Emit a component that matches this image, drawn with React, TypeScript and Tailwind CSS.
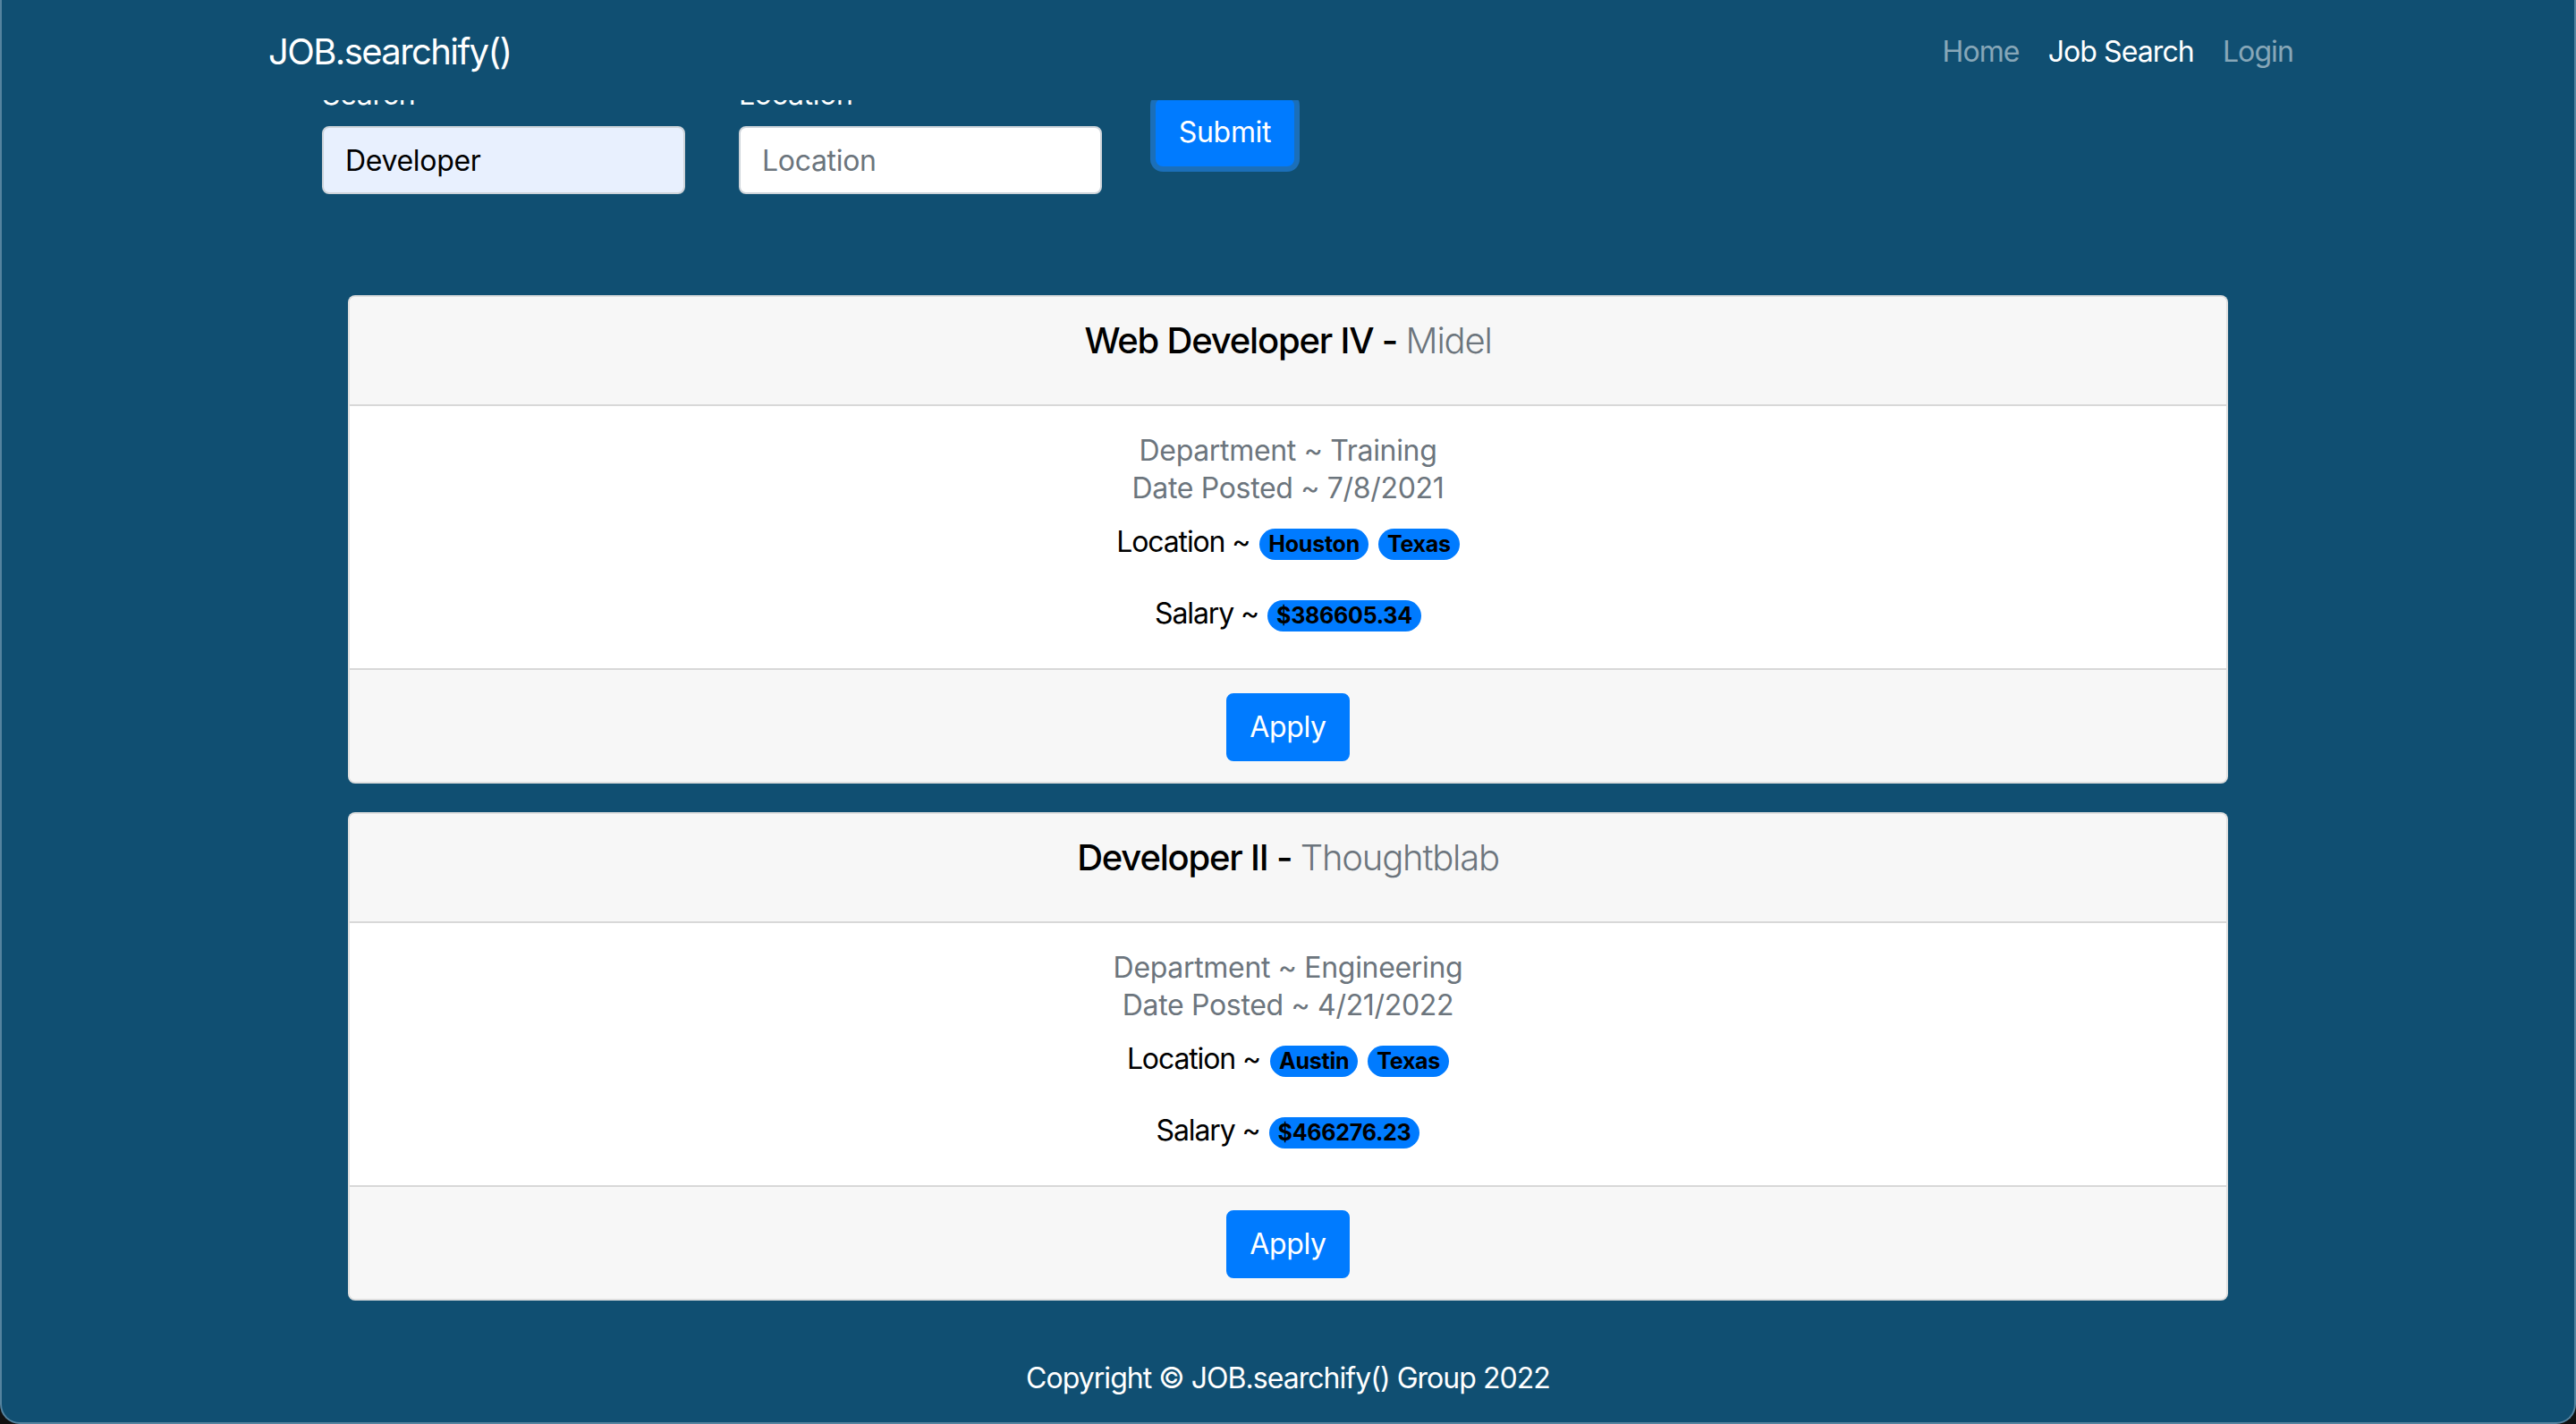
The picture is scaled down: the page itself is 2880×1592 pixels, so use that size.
import React from "react";

function Badge({ children }: { children: React.ReactNode }) {
  return (
    <span className="inline-flex h-[35px] items-center rounded-full bg-[#007bff] px-[10px] text-[25px] font-bold leading-none tracking-[-0.01em] text-black translate-y-[2px]">
      {children}
    </span>
  );
}

type Job = {
  title: string;
  company: string;
  dept: string;
  date: string;
  city: string;
  state: string;
  salary: string;
};

const jobs: Job[] = [
  {
    title: "Web Developer IV",
    company: "Midel",
    dept: "Training",
    date: "7/8/2021",
    city: "Houston",
    state: "Texas",
    salary: "$386605.34",
  },
  {
    title: "Developer II",
    company: "Thoughtblab",
    dept: "Engineering",
    date: "4/21/2022",
    city: "Austin",
    state: "Texas",
    salary: "$466276.23",
  },
];

function JobCard({ job }: { job: Job }) {
  return (
    <div className="overflow-hidden rounded-[8px] border-2 border-black/[.125] bg-white">
      <div className="border-b-2 border-black/[.125] bg-[#f7f7f7] pt-[25px] pb-[47px] text-center">
        <h5 className="text-[40px] leading-[48px] tracking-[-0.03em] text-black">
          <span className="font-medium">{job.title} - </span>
          <span className="font-light text-[#6c757d]">{job.company}</span>
        </h5>
      </div>
      <div className="pt-[29px] pb-[37px] text-center">
        <div className="text-[32px] leading-[42px] tracking-[-0.01em] text-[#6c757d]">
          Department ~ {job.dept}
        </div>
        <div className="text-[32px] leading-[42px] tracking-[-0.01em] text-[#6c757d]">
          Date Posted ~ {job.date}
        </div>
        <div className="mt-[15px] mb-[32px] flex h-[48px] items-center justify-center gap-[11px] text-[32px] leading-[48px] text-black">
          <span className="tracking-[-0.035em]">Location ~</span>
          <Badge>{job.city}</Badge>
          <Badge>{job.state}</Badge>
        </div>
        <div className="flex h-[48px] items-center justify-center gap-[10px] text-[32px] leading-[48px] text-black">
          <span className="tracking-[-0.035em]">Salary ~</span>
          <Badge>{job.salary}</Badge>
        </div>
      </div>
      <div className="flex justify-center border-t-2 border-black/[.125] bg-[#f7f7f7] pt-[26px] pb-[23px]">
        <button className="h-[76px] rounded-[8px] border-2 border-[#007bff] bg-[#007bff] px-[24px] text-[32px] leading-[48px] text-white">
          Apply
        </button>
      </div>
    </div>
  );
}

export default function App() {
  return (
    <div className="min-h-screen w-full bg-[#111] font-['Inter',sans-serif] tracking-[-0.02em]">
      <div className="flex h-[1592px] flex-col overflow-hidden rounded-b-[22px] border-x-2 border-b-2 border-[#55839f] bg-[#104f72]">
        <nav className="relative z-10 h-[112px] shrink-0 bg-[#104f72]">
          <div className="mx-auto flex h-full w-[2280px] items-center justify-between pt-[3px]">
            <span className="text-[40px] leading-[60px] tracking-[-0.04em] text-white">JOB.searchify()</span>
            <div className="flex text-[32px] leading-[48px] tracking-[-0.028em]">
              <a className="px-[16px] text-white/50">Home</a>
              <a className="px-[16px] text-white">Job Search</a>
              <a className="px-[16px] text-white/50">Login</a>
            </div>
          </div>
        </nav>

        <div className="relative z-0 mx-auto -mt-[35px] flex w-[2280px] items-start gap-[60px] pl-[60px]">
          <div className="w-[406px]">
            <label className="mb-[11px] block pt-[5px] text-[32px] leading-[48px] text-white">Search</label>
            <input
              readOnly
              defaultValue="Developer"
              className="block h-[76px] w-full rounded-[8px] border-2 border-[#ced4da] bg-[#e8f0fe] px-[24px] text-[32px] text-black outline-none"
            />
          </div>
          <div className="w-[406px]">
            <label className="mb-[11px] block pt-[5px] text-[32px] leading-[48px] text-white">Location</label>
            <input
              readOnly
              placeholder="Location"
              className="block h-[76px] w-full rounded-[8px] border-2 border-[#ced4da] bg-white px-[24px] text-[32px] text-black outline-none placeholder:text-[#6c757d]"
            />
          </div>
          <button className="mt-[33px] h-[76px] w-[155px] rounded-[8px] border-2 border-[#007bff] bg-[#007bff] text-[32px] leading-[48px] text-white shadow-[0_0_0_6px_rgba(38,143,255,0.5)]">
            Submit
          </button>
        </div>

        <div className="mx-auto mt-[113px] flex w-[2102px] flex-col gap-[32px]">
          {jobs.map((j) => (
            <JobCard key={j.title} job={j} />
          ))}
        </div>

        <footer className="mt-[63px] text-center text-[32px] leading-[48px] tracking-[-0.03em] text-white">
          Copyright © JOB.searchify() Group 2022
        </footer>
      </div>
    </div>
  );
}
